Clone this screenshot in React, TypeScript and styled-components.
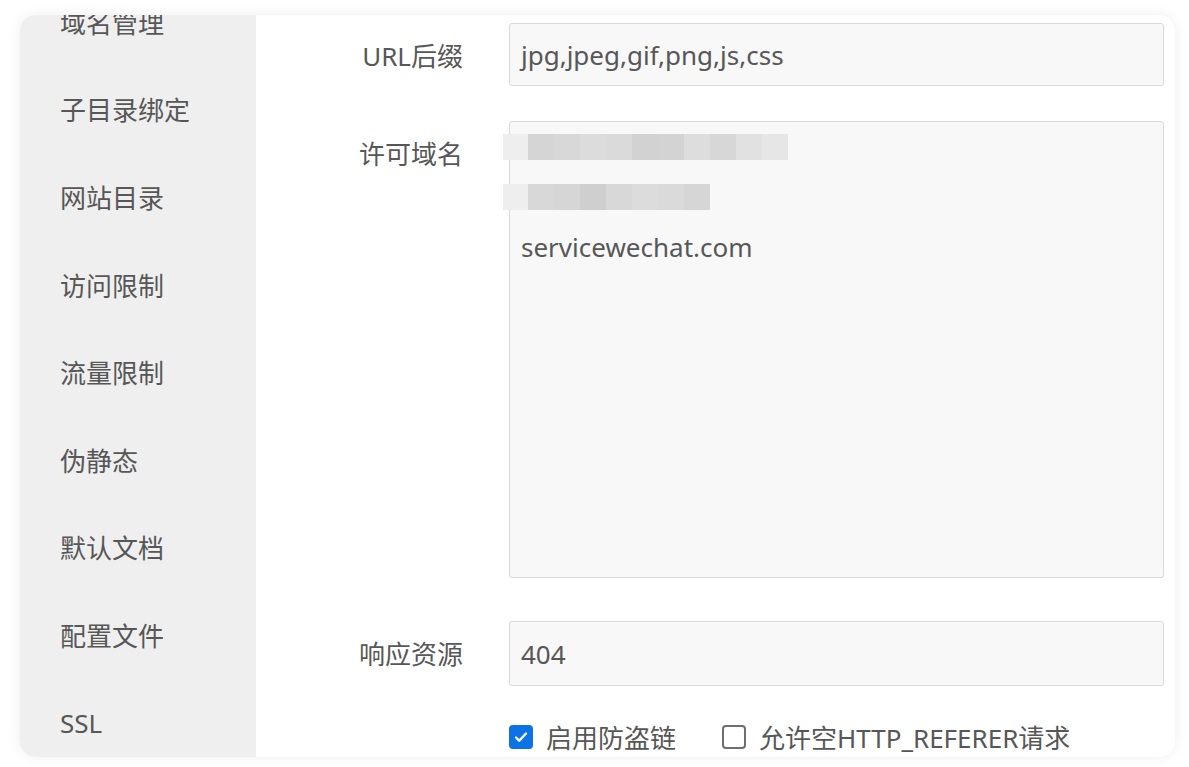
import * as React from 'react';
import styled, { createGlobalStyle } from 'styled-components';

const GlobalStyle = createGlobalStyle`
  html, body {
    margin: 0;
    padding: 0;
    background: #ffffff;
  }
  body {
    font-family: "Noto Sans", "Noto Sans CJK SC", sans-serif;
    color: #555555;
  }
`;

const Page = styled.div`
  padding: 15px 14px 10px 20px;
  height: 767px;
  box-sizing: border-box;
`;

const Card = styled.div`
  display: flex;
  height: 742px;
  background: #ffffff;
  border-radius: 16px;
  box-shadow: 0 0 14px rgba(0, 0, 0, 0.07);
  overflow: hidden;
`;

const Sidebar = styled.div`
  width: 236px;
  flex-shrink: 0;
  background: #efefef;
  overflow: hidden;
`;

const SideList = styled.div`
  margin-top: -37px;
`;

const SideItem = styled.div`
  height: 87.6px;
  display: flex;
  align-items: center;
  padding-left: 40px;
  font-size: 26px;
  color: #575757;
`;

const Main = styled.div`
  flex: 1;
  padding: 8px 11px 0 0;
`;

const FormRow = styled.div<{ $top: number }>`
  display: grid;
  grid-template-columns: 207px 1fr;
  column-gap: 46px;
  align-items: start;
  margin-top: ${(p) => p.$top}px;
`;

const Label = styled.div`
  text-align: right;
  font-size: 26px;
  line-height: 58px;
  padding-top: 4px;
  color: #575757;
  white-space: nowrap;
`;

const Field = styled.div<{ $h: number }>`
  height: ${(p) => p.$h}px;
  box-sizing: border-box;
  border: 1.5px solid #d9d9d9;
  border-radius: 3px;
  background: #f8f8f8;
  padding: 0 11px;
  font-size: 26px;
  color: #575757;
  display: flex;
  align-items: center;
`;

const TextArea = styled.div`
  height: 457px;
  box-sizing: border-box;
  border: 1.5px solid #d9d9d9;
  border-radius: 3px;
  background: #f8f8f8;
  padding: 0 11px;
  font-size: 26px;
  color: #575757;
`;

const Line = styled.div`
  height: 50px;
  display: flex;
  align-items: center;
`;

const MosaicLine = styled(Line)`
  margin-left: -18px;
`;

const Cell = styled.span<{ $shade: string; $w?: number }>`
  display: block;
  width: ${(p) => p.$w ?? 26}px;
  height: 26px;
  background: ${(p) => p.$shade};
`;

const Checks = styled.div`
  display: flex;
  align-items: center;
  gap: 46px;
  height: 26px;
`;

const CheckLabel = styled.label`
  display: flex;
  align-items: center;
  gap: 13px;
  font-size: 26px;
  color: #575757;
  white-space: nowrap;
`;

const Box = styled.span<{ $on?: boolean }>`
  width: 24px;
  height: 24px;
  box-sizing: border-box;
  border-radius: 4px;
  display: flex;
  align-items: center;
  justify-content: center;
  background: ${(p) => (p.$on ? '#0b73e6' : '#ffffff')};
  border: ${(p) => (p.$on ? 'none' : '2px solid #6e6e6e')};
`;

const menu = ['域名管理', '子目录绑定', '网站目录', '访问限制', '流量限制', '伪静态', '默认文档', '配置文件', 'SSL'];

const row1 = ['#d5d5d5', '#d8d8d8', '#dcdcdc', '#dadada', '#d2d2d2', '#d3d3d3', '#dddddd', '#d7d7d7', '#e1e1e1', '#e6e6e6'];
const row2 = ['#d8d8d8', '#d6d6d6', '#cfcfcf', '#d8d8d8', '#dcdcdc', '#dadada', '#d6d6d6'];

const Mosaic = ({ shades }: { shades: string[] }) => (
  <MosaicLine>
    <Cell $shade="#eeeeee" $w={25} />
    {shades.map((s, i) => (
      <Cell key={i} $shade={s} />
    ))}
  </MosaicLine>
);

export default function App() {
  return (
    <Page>
      <GlobalStyle />
      <Card>
        <Sidebar>
          <SideList>
            {menu.map((m) => (
              <SideItem key={m}>{m}</SideItem>
            ))}
          </SideList>
        </Sidebar>
        <Main>
          <FormRow $top={0}>
            <Label>URL后缀</Label>
            <Field $h={63}>jpg,jpeg,gif,png,js,css</Field>
          </FormRow>
          <FormRow $top={35}>
            <Label>许可域名</Label>
            <TextArea>
              <Mosaic shades={row1} />
              <Mosaic shades={row2} />
              <Line>servicewechat.com</Line>
            </TextArea>
          </FormRow>
          <FormRow $top={43}>
            <Label>响应资源</Label>
            <Field $h={65}>404</Field>
          </FormRow>
          <FormRow $top={38}>
            <div />
            <Checks>
              <CheckLabel>
                <Box $on>
                  <svg width="16" height="16" viewBox="0 0 16 16">
                    <path d="M3 8.5l3.2 3.2L13 4.5" fill="none" stroke="#fff" strokeWidth="2.4" strokeLinecap="round" strokeLinejoin="round" />
                  </svg>
                </Box>
                启用防盗链
              </CheckLabel>
              <CheckLabel>
                <Box />
                允许空HTTP_REFERER请求
              </CheckLabel>
            </Checks>
          </FormRow>
        </Main>
      </Card>
    </Page>
  );
}
